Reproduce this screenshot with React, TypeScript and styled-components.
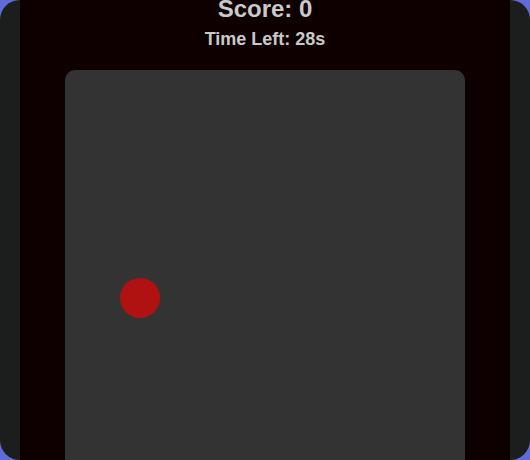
import React from 'react';
import styled, { createGlobalStyle } from 'styled-components';

const GlobalStyle = createGlobalStyle`
  html, body {
    margin: 0;
    padding: 0;
    background-color: #5d6cd6;
    overflow: hidden;
  }
  body {
    font-family: "Liberation Sans", Arial, sans-serif;
  }
`;

const Frame = styled.div`
  width: 530px;
  height: 460px;
  box-sizing: border-box;
  padding: 0 20px;
  background-color: #1c1d1d;
  border-radius: 20px;
  overflow: hidden;
  display: flex;
`;

const Column = styled.div`
  flex: 1;
  background-color: #0e0000;
  display: flex;
  flex-direction: column;
  align-items: center;
  overflow: hidden;
`;

const Score = styled.h2`
  margin: -3px 0 0;
  font-size: 24px;
  line-height: 1;
  font-weight: bold;
  color: #c9c9c9;
`;

const TimeLeft = styled.div`
  margin-top: 9px;
  font-size: 18px;
  line-height: 1;
  font-weight: bold;
  color: #c9c9c9;
`;

const GameArea = styled.div`
  position: relative;
  margin-top: 22px;
  width: 400px;
  height: 400px;
  flex-shrink: 0;
  background-color: #333333;
  border-radius: 10px;
`;

const Target = styled.div<{ $x: number; $y: number; $size: number }>`
  position: absolute;
  left: ${(p) => p.$x}px;
  top: ${(p) => p.$y}px;
  width: ${(p) => p.$size}px;
  height: ${(p) => p.$size}px;
  border-radius: 50%;
  background-color: #b01212;
`;

const App = () => {
  const score = 0;
  const timeLeft = 28;

  return (
    <>
      <GlobalStyle />
      <Frame>
        <Column>
          <Score>Score: {score}</Score>
          <TimeLeft>Time Left: {timeLeft}s</TimeLeft>
          <GameArea>
            <Target $x={55} $y={208} $size={40} />
          </GameArea>
        </Column>
      </Frame>
    </>
  );
};

export default App;
